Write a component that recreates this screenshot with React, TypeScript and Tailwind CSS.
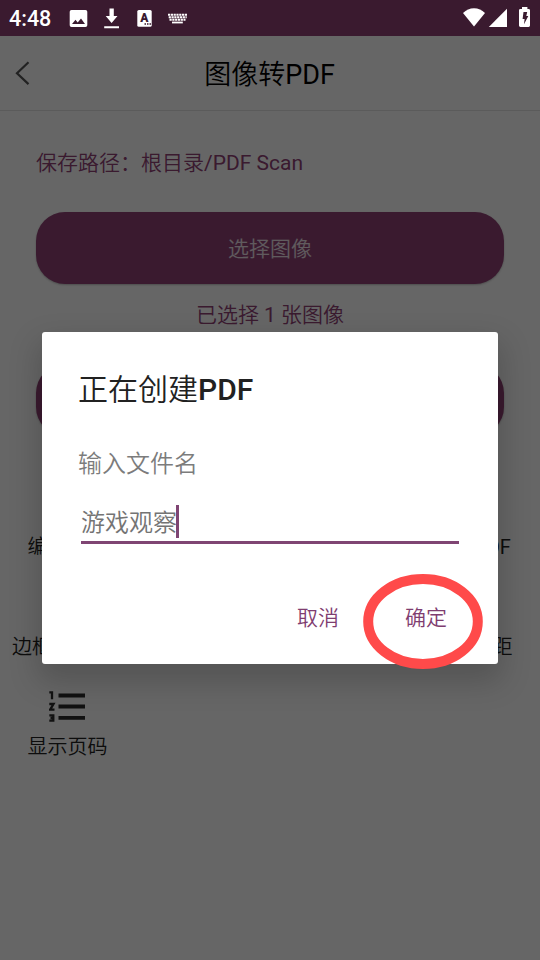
import type { ReactNode } from 'react'

function StatusBar() {
  return (
    <header className="flex h-9 shrink-0 items-center bg-[#3a1a2f] text-white">
      <span className="ml-[9px] w-[59px] pt-px text-[21.5px] leading-9 font-medium">4:48</span>
      <svg className="h-9 w-[124px]" viewBox="68 0 124 36" fill="currentColor">
        <path
          fillRule="evenodd"
          d="M71.5 10h14a1.8 1.8 0 0 1 1.8 1.8v13.4a1.8 1.8 0 0 1-1.8 1.8h-14a1.8 1.8 0 0 1-1.8-1.8V11.800a1.8 1.8 0 0 1 1.800-1.8zM72 24h13l-4-5.500-3.300 4-2.200-2.700z"
        />
        <path d="M109.500 8.500h4.300v7.500h3.700l-5.900 7-5.900-7h3.800zM104.200 26.300h14.800v2h-14.800z" />
        <rect x="137.300" y="10" width="14.400" height="16.800" rx="1.600" />
        <text x="144.400" y="21.800" textAnchor="middle" fontSize="12" fontWeight="900" fill="#3a1a2f">A</text>
        <path d="M144.500 24h1.500M147 24h1.500M149.500 24h1.500" stroke="#3a1a2f" strokeWidth="1.300" />
        <path
          d="M168 14.700h19M168.700 17.300h18M169.500 19.800h16"
          stroke="currentColor"
          strokeWidth="2.100"
          strokeDasharray="2.200 0.600"
        />
        <path d="M172 21.600h10.800v1.800h-10.800z" />
      </svg>
      <svg className="ml-auto h-9 w-[80px]" viewBox="460 0 80 36" fill="currentColor">
        <path d="M474 26.400 463 13c3.200-3 6.800-4.800 11-4.800s7.900 1.800 11 4.800z" />
        <path d="M507 8.800V27h-18.200z" />
        <path
          fillRule="evenodd"
          d="M522 7h5.400v1.900h1.200a1.400 1.400 0 0 1 1.400 1.400v15.300a1.400 1.400 0 0 1-1.400 1.400h-8.200a1.400 1.400 0 0 1-1.400-1.400V10.300a1.400 1.400 0 0 1 1.400-1.400h1.600zM523.500 12h3.700l-.9 4h2l-4.300 8.300.6-5.300h-2z"
        />
      </svg>
    </header>
  )
}

function Tool({ label, children, className = '' }: { label: ReactNode; children?: ReactNode; className?: string }) {
  return (
    <div className={`flex h-[100px] flex-col items-center whitespace-nowrap ${className}`}>
      <div className="h-[55px] w-full">{children}</div>
      <span className="text-[20px] leading-[28px]">{label}</span>
    </div>
  )
}

function NumberedListIcon() {
  return (
    <svg className="mx-auto mt-[11px] block h-[36px] w-[38px]" viewBox="49 689 38 36" fill="none" stroke="#2b2b2b">
      <path strokeWidth="3.800" d="M58.500 695.500H85M58.500 706.500H85M58.500 717.800H85" />
      <path
        strokeWidth="2.300"
        d="M49.300 692.400h2.700v6.900M49.300 704h4.200l-3.300 5.600h4.300M49.300 715.300h4v5.400h-4M50.500 718h3"
      />
    </svg>
  )
}

function NameDialog() {
  return (
    <div className="absolute top-[332px] left-[42px] flex h-[332px] w-[456px] flex-col rounded-[3px] bg-white px-9 shadow-[0_14px_30px_4px_rgba(0,0,0,0.18)]">
      <h2 className="mt-[38px] text-[30px] leading-[40px] text-[#212121]">
        正在创建<span className="font-medium">PDF</span>
      </h2>
      <p className="mt-[38px] text-[24px] leading-8 text-[#7c7c7c]">输入文件名</p>
      <div className="mx-[3px] mt-[24px] flex h-[40px] items-start border-b-3 border-[#7f4573]">
        <span className="pt-px text-[24px] leading-[36px] text-[#747474]">游戏观察</span>
        <span className="-ml-px mt-[1px] h-[33px] w-[3px] bg-[#7f4573]" />
      </div>
      <div className="mt-[58px] flex justify-end gap-[66px] pr-[15px] text-[21px] leading-8 text-[#7f3d70]">
        <button>取消</button>
        <button>确定</button>
      </div>
    </div>
  )
}

export default function App() {
  return (
    <div className="relative flex h-[960px] w-[540px] flex-col overflow-hidden bg-white font-['Roboto','Noto_Sans_CJK_SC',sans-serif] font-[350]">
      <StatusBar />
      <nav className="grid h-[75px] shrink-0 grid-cols-[60px_1fr_60px] items-center border-b border-[#e4e4e4]">
        <svg className="ml-[15px] h-6 w-4" viewBox="0 0 16 24" fill="none" stroke="#555" strokeWidth="2.200">
          <path d="M13.500 1.300 2 12.200l11.500 10.900" />
        </svg>
        <h1 className="pt-1 pr-px text-center text-[27px] leading-9 text-black">
          图像转<span className="font-normal">PDF</span>
        </h1>
      </nav>
      <main className="flex flex-col text-[21px] leading-7 text-[#914176]">
        <p className="mt-[38px] ml-9">
          保存路径：根目录<span className="font-normal">/PDF Scan</span>
        </p>
        <button className="mx-9 mt-[35px] h-[72px] rounded-[29px] bg-[#914176] pt-0.5 text-white/85 shadow-[0_1px_2px_rgba(0,0,0,0.25)]">
          选择图像
        </button>
        <p className="mt-[17px] text-center">
          已选择 <span className="font-normal">1</span> 张图像
        </p>
        <div className="mx-9 mt-[35px] h-[72px] rounded-[29px] bg-[#914176] shadow-[0_1px_2px_rgba(0,0,0,0.25)]" />
        <div className="mt-[42px] grid grid-cols-4 text-[#222]">
          <Tool label="编辑图像" />
          <Tool label={<>预览<span className="font-normal">PDF</span></>} className="col-start-4" />
          <Tool label="边框宽度" className="items-start! pl-3" />
          <Tool label="设置边距" className="col-start-4" />
          <Tool label="显示页码">
            <NumberedListIcon />
          </Tool>
        </div>
      </main>
      <div className="absolute inset-x-0 top-9 bottom-0 bg-black/60" />
      <NameDialog />
      <svg className="absolute top-[570px] left-[360px] h-[102px] w-[126px]" fill="none">
        <ellipse cx="63" cy="51.500" rx="54.800" ry="42.500" stroke="#ff4a4a" strokeWidth="10" />
      </svg>
    </div>
  )
}
